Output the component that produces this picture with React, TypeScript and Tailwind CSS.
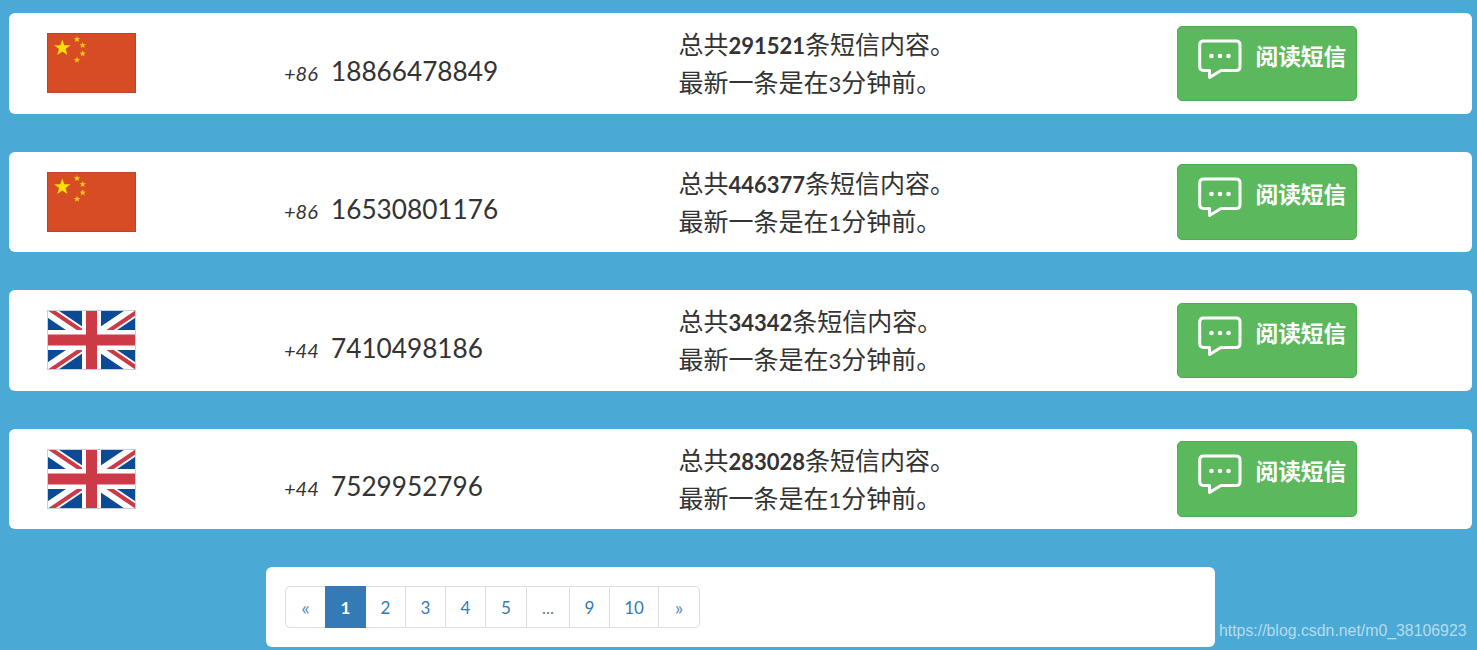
const starPoints = (cx: number, cy: number, r: number) =>
  Array.from({ length: 10 }, (_, k) => {
    const a = -Math.PI / 2 + (k * Math.PI) / 5;
    const rr = k % 2 === 0 ? r : r * 0.4;
    return `${(cx + rr * Math.cos(a)).toFixed(2)},${(cy + rr * Math.sin(a)).toFixed(2)}`;
  }).join(" ");

const CN = () => (
  <svg width="89" height="60" viewBox="0 0 89 60" className="block">
    <rect width="89" height="60" fill="#d74c24" />
    <rect x="0.5" y="0.5" width="88" height="59" fill="none" stroke="#b8462a" strokeWidth="1" />
    <polygon points={starPoints(15.3, 15, 8.6)} fill="#fde000" />
    <polygon points={starPoints(30, 6.3, 3.4)} fill="#f8cf12" />
    <polygon points={starPoints(35.7, 12.3, 3.4)} fill="#f8cf12" />
    <polygon points={starPoints(35.7, 20.7, 3.4)} fill="#f8cf12" />
    <polygon points={starPoints(30, 27, 3.4)} fill="#f8cf12" />
  </svg>
);

const UK = () => (
  <svg width="89" height="60" viewBox="0 0 89 60" className="block">
    <rect width="89" height="60" fill="#0b4a94" />
    <path d="M0 0 L89 60 M89 0 L0 60" stroke="#ffffff" strokeWidth="12" />
    <path d="M0 0 L44.5 30 M89 60 L44.5 30" stroke="#cc3a48" strokeWidth="4" transform="translate(1.5 -1.5)" />
    <path d="M89 0 L44.5 30 M0 60 L44.5 30" stroke="#cc3a48" strokeWidth="4" transform="translate(1.5 1.5)" />
    <rect x="35" width="19" height="60" fill="#ffffff" />
    <rect y="20" width="89" height="20" fill="#ffffff" />
    <rect x="39" width="11" height="60" fill="#cc3a48" />
    <rect y="24.5" width="89" height="11" fill="#cc3a48" />
    <rect x="0.5" y="0.5" width="88" height="59" fill="none" stroke="#c5cfe0" strokeWidth="1" />
  </svg>
);

const Chat = () => (
  <svg width="44" height="41" viewBox="0 0 44 41" fill="none" className="block shrink-0">
    <path d="M5.5 2 H38 Q42 2 42 6 V27.5 Q42 31.5 38 31.5 H23 L11.5 38.5 V31.5 H5.5 Q1.7 31.5 1.7 27.5 V6 Q1.7 2 5.5 2 Z" stroke="#fff" strokeWidth="3" strokeLinejoin="round" />
    <circle cx="13.5" cy="17" r="2.3" fill="#fff" />
    <circle cx="22" cy="17" r="2.3" fill="#fff" />
    <circle cx="30.5" cy="17" r="2.3" fill="#fff" />
  </svg>
);

const rows = [
  { flag: <CN />, code: "+86", num: "18866478849", total: "291521", mins: 3 },
  { flag: <CN />, code: "+86", num: "16530801176", total: "446377", mins: 1 },
  { flag: <UK />, code: "+44", num: "7410498186", total: "34342", mins: 3 },
  { flag: <UK />, code: "+44", num: "7529952796", total: "283028", mins: 1 },
];

const pages = ["«", "1", "2", "3", "4", "5", "...", "9", "10", "»"];
const widths = ["w-[41px]", "w-[41px]", "w-[41px]", "w-[41px]", "w-[41px]", "w-[42px]", "w-[44px]", "w-[41px]", "w-[50px]", "w-[42px]"];

export default function App() {
  const font = "font-['Lato','Noto_Sans_CJK_SC',sans-serif]";
  return (
    <div className={`relative w-[1477px] h-[650px] overflow-hidden bg-[#4aa9d5] pt-[13px] text-[#333333] ${font}`}>
      <div className="ml-[9px] w-[1463px] flex flex-col gap-[38px]">
        {rows.map((r, i) => (
          <div key={i} className="h-[100.6px] bg-white rounded-[6px] flex">
            <div className="w-[275px] pl-[38px] pt-[20px] shrink-0">{r.flag}</div>
            <div className="w-[394.5px] shrink-0 pt-[39.5px] flex items-baseline h-fit">
              <i className="text-[20px] w-[47px] leading-[36px]">{r.code}</i>
              <span className="text-[26.2px] leading-[36px]">{r.num}</span>
            </div>
            <div className="w-[498.5px] shrink-0 pt-[13px] text-[25px] leading-[37px]">
              <div>
                总共<b className="text-[22px]">{r.total}</b>条短信内容。
              </div>
              <div>
                最新一条是在<span className="text-[22px]">{r.mins}</span>分钟前。
              </div>
            </div>
            <div className="pt-[12.6px]">
              <button className="w-[180px] h-[75.4px] bg-[#5cb85c] border border-[#4cae4c] rounded-[5px] flex items-start pl-[20px] pt-[12px] text-white font-bold">
                <Chat />
                <span className="ml-[13.5px] mt-[3px] text-[22.7px] leading-[30px] whitespace-nowrap">阅读短信</span>
              </button>
            </div>
          </div>
        ))}
      </div>
      <div className="ml-[266px] mt-[38px] w-[949px] h-[80px] bg-white rounded-[6px] pl-[19px] pt-[19px]">
        <div className="flex h-[42px] w-fit">
          {pages.map((p, i) => (
            <div
              key={i}
              className={`${widths[i]} flex items-center justify-center border text-[17px] ${i > 0 ? "-ml-px" : ""} ${i === 0 ? "rounded-l-[5px]" : ""} ${i === 9 ? "rounded-r-[5px]" : ""} ${
                i === 1
                  ? "bg-[#337ab7] border-[#337ab7] text-white font-bold z-10"
                  : i === 6
                    ? "bg-white border-[#dddddd] text-[#777777]"
                    : i === 0 || i === 9
                      ? "bg-white border-[#dddddd] text-[#5f8fbf] text-[20px]"
                      : "bg-white border-[#dddddd] text-[#337ab7]"
              }`}
            >
              {p}
            </div>
          ))}
        </div>
      </div>
      <div className="absolute left-[1219px] top-[621px] font-['Liberation_Sans',sans-serif] text-[15.85px] leading-[20px] text-white/60 whitespace-nowrap">
        https://blog.csdn.net/m0_38106923
      </div>
    </div>
  );
}
